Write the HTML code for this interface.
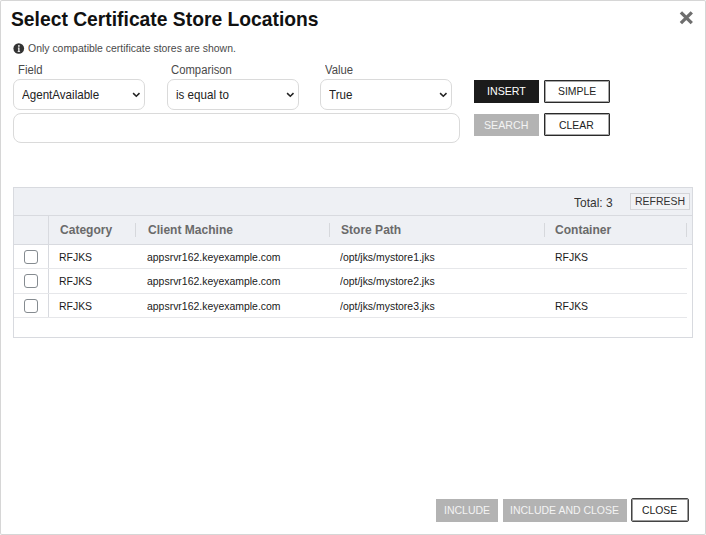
<!DOCTYPE html>
<html><head><meta charset="utf-8">
<style>
*{box-sizing:border-box;margin:0;padding:0}
html,body{width:706px;height:535px;overflow:hidden;background:#fff;font-family:"Liberation Sans",sans-serif;color:#222}
.dlg{position:absolute;left:0;top:0;width:706px;height:535px;box-shadow:inset 0 0 0 1px #d6d6d6;background:#fff;border-radius:2px}
.a{position:absolute}
.t{position:absolute;white-space:nowrap;line-height:1;padding:0 2px 5px 0;transform:scaleX(0.95238);transform-origin:0 0}
.title{left:10.9px;top:8.9px;font-size:20.265px;font-weight:bold;color:#111}
.info{left:28.2px;top:43.4px;font-size:10.973px;color:#4a4a4a}
.lbl{top:64.9px;font-size:11.865px;color:#4a4a4a}
.sel{position:absolute;top:79px;height:30.5px;border:1px solid #dadada;border-radius:7px;background:#fff}
.stx{top:89.2px;font-size:12.180px;color:#222}
.chev{position:absolute;top:91.6px}
.btn{position:absolute;height:22.5px}
.bt{font-size:11.204px;color:#222}
.b-dark{background:#1b1b1b}
.b-out{background:#fff;border:1px solid #2a2a2a;box-shadow:inset 0 0 0 1px rgba(60,60,60,.45);border-radius:1px}
.b-gray{background:#b3b3b3}
.hl{position:absolute;height:1px}
.vl{position:absolute;width:1px}
.h{top:223.9px;font-size:12.65px;font-weight:bold;color:#6a6a6a}
.c{font-size:10.973px;color:#1a1a1a}
.cb{position:absolute;left:24px;width:14px;height:14px;border:1.2px solid #858b90;border-radius:3px;background:#fff}
</style></head><body>
<div class="dlg">
<div class="t title">Select Certificate Store Locations</div>
<svg class="a" style="left:676px;top:7.6px" width="20" height="20" viewBox="0 0 20 20"><path d="M4.9 4.3L15.8 15.2M15.8 4.3L4.9 15.2" stroke="#6e6e6e" stroke-width="3.3" stroke-linecap="butt"/></svg>
<svg class="a" style="left:13px;top:42.7px" width="12" height="12" viewBox="0 0 12 12"><circle cx="5.75" cy="5.5" r="5.35" fill="#333"/><circle cx="5.9" cy="2.9" r="0.9" fill="#f4f4f4"/><path d="M4.9 4.5H6.5V8.2H7.1V9.1H4.6V8.2H5.2V5.4H4.9Z" fill="#f4f4f4"/></svg>
<div class="t info">Only compatible certificate stores are shown.</div>
<div class="t lbl" style="left:18px">Field</div>
<div class="t lbl" style="left:171px">Comparison</div>
<div class="t lbl" style="left:324.5px">Value</div>

<div class="sel" style="left:13px;width:132px"></div>
<div class="sel" style="left:167px;width:132px"></div>
<div class="sel" style="left:320px;width:132px"></div>
<div class="t stx" style="left:22px">AgentAvailable</div>
<div class="t stx" style="left:175.5px">is equal to</div>
<div class="t stx" style="left:329px">True</div>
<svg class="chev" style="left:132.2px" width="9" height="7" viewBox="0 0 9 7"><path d="M1.1 1.1L4.3 4.3L7.5 1.1" fill="none" stroke="#222" stroke-width="1.5"/></svg>
<svg class="chev" style="left:285.8px" width="9" height="7" viewBox="0 0 9 7"><path d="M1.1 1.1L4.3 4.3L7.5 1.1" fill="none" stroke="#222" stroke-width="1.5"/></svg>
<svg class="chev" style="left:439.2px" width="9" height="7" viewBox="0 0 9 7"><path d="M1.1 1.1L4.3 4.3L7.5 1.1" fill="none" stroke="#222" stroke-width="1.5"/></svg>
<div class="a" style="left:13px;top:113px;width:447px;height:29.5px;border:1px solid #dadada;border-radius:8px"></div>

<div class="btn b-dark" style="left:474px;top:80px;width:65.3px"></div>
<div class="btn b-out" style="left:544px;top:80px;width:65.6px"></div>
<div class="btn b-gray" style="left:474px;top:113.6px;width:65.3px;height:22.4px"></div>
<div class="btn b-out" style="left:544px;top:113.3px;width:65.6px;height:22.8px"></div>
<div class="t bt" style="left:487px;top:86px;color:#fff">INSERT</div>
<div class="t bt" style="left:557.5px;top:86px;font-size:10.95px">SIMPLE</div>
<div class="t bt" style="left:484.3px;top:119.8px;color:#f4f4f4">SEARCH</div>
<div class="t bt" style="left:559px;top:119.5px;font-size:10.95px">CLEAR</div>

<!-- table -->
<div class="a" style="left:13px;top:187px;width:680px;height:151px;border:1px solid #d8dadf;background:#fff"></div>
<div class="a" style="left:14px;top:188px;width:678px;height:56px;background:#eef0f4"></div>
<div class="hl" style="left:14px;top:215px;width:678px;background:#d8dadf"></div>
<div class="hl" style="left:14px;top:244px;width:678px;background:#d8dadf"></div>
<div class="t" style="left:574.2px;top:196.8px;font-size:12.600px;color:#333">Total: 3</div>
<div class="a" style="left:630.3px;top:193px;width:59.3px;height:16.5px;border:1px solid #d4d5d9;background:#f1f2f5"></div>
<div class="t" style="left:635.3px;top:196.3px;font-size:11.025px;color:#333">REFRESH</div>
<div class="vl" style="left:48px;top:216px;height:102px;background:#d8dadf"></div>
<div class="vl" style="left:135px;top:223px;height:14px;background:#d6d8dc"></div>
<div class="vl" style="left:329px;top:223px;height:14px;background:#d6d8dc"></div>
<div class="vl" style="left:543.5px;top:223px;height:14px;background:#d6d8dc"></div>
<div class="vl" style="left:686px;top:223px;height:14px;background:#d6d8dc"></div>
<div class="t h" style="left:59.6px">Category</div>
<div class="t h" style="left:147.6px">Client Machine</div>
<div class="t h" style="left:340.6px">Store Path</div>
<div class="t h" style="left:555px">Container</div>

<div class="hl" style="left:14px;top:268px;width:673px;background:#e6e7ea"></div>
<div class="hl" style="left:14px;top:293px;width:673px;background:#e6e7ea"></div>
<div class="hl" style="left:14px;top:317px;width:673px;background:#e6e7ea"></div>
<div class="cb" style="top:249.7px"></div>
<div class="cb" style="top:274.3px"></div>
<div class="cb" style="top:298.9px"></div>

<div class="t c" style="left:59.2px;top:252.2px">RFJKS</div>
<div class="t c" style="left:146.5px;top:252.2px">appsrvr162.keyexample.com</div>
<div class="t c" style="left:339.5px;top:252.2px">/opt/jks/mystore1.jks</div>
<div class="t c" style="left:554.6px;top:252.2px">RFJKS</div>
<div class="t c" style="left:59.2px;top:276.4px">RFJKS</div>
<div class="t c" style="left:146.5px;top:276.4px">appsrvr162.keyexample.com</div>
<div class="t c" style="left:339.5px;top:276.4px">/opt/jks/mystore2.jks</div>
<div class="t c" style="left:59.2px;top:300.6px">RFJKS</div>
<div class="t c" style="left:146.5px;top:300.6px">appsrvr162.keyexample.com</div>
<div class="t c" style="left:339.5px;top:300.6px">/opt/jks/mystore3.jks</div>
<div class="t c" style="left:554.6px;top:300.6px">RFJKS</div>

<!-- bottom buttons -->
<div class="btn b-gray" style="left:436px;top:498.6px;width:62px;height:23.2px"></div>
<div class="btn b-gray" style="left:502.8px;top:498.6px;width:124.5px;height:23.2px"></div>
<div class="btn b-out" style="left:631.2px;top:498.3px;width:58px;height:23.4px;border-color:#444;box-shadow:inset 0 0 0 1px rgba(90,90,90,.6);border-radius:2px"></div>
<div class="t bt" style="left:443.8px;top:504.7px;font-size:11.025px;color:#f4f4f4">INCLUDE</div>
<div class="t bt" style="left:509.8px;top:504.7px;font-size:11.025px;color:#f4f4f4">INCLUDE AND CLOSE</div>
<div class="t bt" style="left:642.2px;top:504.6px;font-size:10.9px">CLOSE</div>
</div>
</body></html>
